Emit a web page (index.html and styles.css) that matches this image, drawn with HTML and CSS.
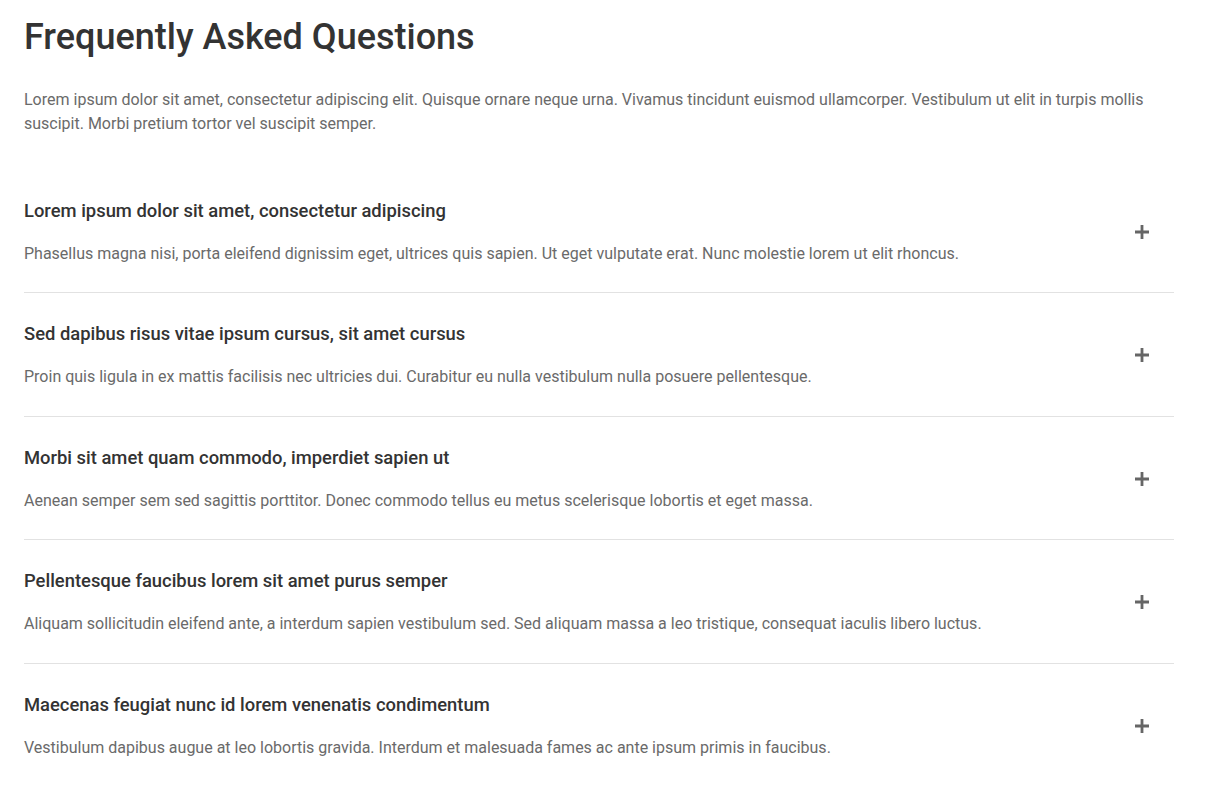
FILE: index.html
```html
<!DOCTYPE html>
<html>
<head>
<meta charset="utf-8">
<link rel="stylesheet" href="styles.css">
</head>
<body>
<div class="faq">
  <h1 class="faq-title">Frequently Asked Questions</h1>
  <p class="faq-intro">Lorem ipsum dolor sit amet, consectetur adipiscing elit. Quisque ornare neque urna. Vivamus tincidunt euismod ullamcorper. Vestibulum ut elit in turpis mollis suscipit. Morbi pretium tortor vel suscipit semper.</p>
  <div class="faq-list">
    <div class="faq-item">
      <div class="faq-text">
        <h3 class="faq-q">Lorem ipsum dolor sit amet, consectetur adipiscing</h3>
        <p class="faq-a">Phasellus magna nisi, porta eleifend dignissim eget, ultrices quis sapien. Ut eget vulputate erat. Nunc molestie lorem ut elit rhoncus.</p>
      </div>
      <span class="faq-icon"><svg viewBox="0 0 14 14" width="14" height="14"><path d="M5.6 0h2.8v5.6H14v2.8H8.4V14H5.6V8.4H0V5.6h5.6z" fill="currentColor"/></svg></span>
    </div>
    <div class="faq-item">
      <div class="faq-text">
        <h3 class="faq-q">Sed dapibus risus vitae ipsum cursus, sit amet cursus</h3>
        <p class="faq-a">Proin quis ligula in ex mattis facilisis nec ultricies dui. Curabitur eu nulla vestibulum nulla posuere pellentesque.</p>
      </div>
      <span class="faq-icon"><svg viewBox="0 0 14 14" width="14" height="14"><path d="M5.6 0h2.8v5.6H14v2.8H8.4V14H5.6V8.4H0V5.6h5.6z" fill="currentColor"/></svg></span>
    </div>
    <div class="faq-item">
      <div class="faq-text">
        <h3 class="faq-q">Morbi sit amet quam commodo, imperdiet sapien ut</h3>
        <p class="faq-a">Aenean semper sem sed sagittis porttitor. Donec commodo tellus eu metus scelerisque lobortis et eget massa.</p>
      </div>
      <span class="faq-icon"><svg viewBox="0 0 14 14" width="14" height="14"><path d="M5.6 0h2.8v5.6H14v2.8H8.4V14H5.6V8.4H0V5.6h5.6z" fill="currentColor"/></svg></span>
    </div>
    <div class="faq-item">
      <div class="faq-text">
        <h3 class="faq-q">Pellentesque faucibus lorem sit amet purus semper</h3>
        <p class="faq-a">Aliquam sollicitudin eleifend ante, a interdum sapien vestibulum sed. Sed aliquam massa a leo tristique, consequat iaculis libero luctus.</p>
      </div>
      <span class="faq-icon"><svg viewBox="0 0 14 14" width="14" height="14"><path d="M5.6 0h2.8v5.6H14v2.8H8.4V14H5.6V8.4H0V5.6h5.6z" fill="currentColor"/></svg></span>
    </div>
    <div class="faq-item">
      <div class="faq-text">
        <h3 class="faq-q">Maecenas feugiat nunc id lorem venenatis condimentum</h3>
        <p class="faq-a">Vestibulum dapibus augue at leo lobortis gravida. Interdum et malesuada fames ac ante ipsum primis in faucibus.</p>
      </div>
      <span class="faq-icon"><svg viewBox="0 0 14 14" width="14" height="14"><path d="M5.6 0h2.8v5.6H14v2.8H8.4V14H5.6V8.4H0V5.6h5.6z" fill="currentColor"/></svg></span>
    </div>
  </div>
</div>
</body>
</html>
```
FILE: styles.css
```css
html, body {
  margin: 0;
  padding: 0;
  background: #fff;
}
body {
  font-family: Roboto, "Liberation Sans", sans-serif;
  color: #6a6a6a;
}
.faq {
  width: 1150px;
  margin-left: 24px;
  padding-top: 15px;
}
.faq-title {
  margin: 0;
  font-size: 36px;
  line-height: 44px;
  font-weight: 500;
  color: #333;
}
.faq-intro {
  margin: 29px 0 0;
  font-size: 16px;
  line-height: 24px;
  color: #6a6a6a;
}
.faq-list {
  margin-top: 33.5px;
}
.faq-item {
  display: flex;
  align-items: center;
  padding: 28px 0 26.5px;
  border-bottom: 1px solid #e2e2e2;
}
.faq-item:last-child {
  border-bottom: none;
}
.faq-text {
  flex: 1;
}
.faq-q {
  margin: 0 0 18px;
  font-size: 18.4px;
  line-height: 26px;
  font-weight: 500;
  color: #333;
}
.faq-a {
  margin: 0;
  font-size: 16px;
  line-height: 24px;
  color: #6a6a6a;
}
.faq-icon {
  display: flex;
  width: 14px;
  height: 14px;
  margin-right: 25px;
  color: #666;
}
```
